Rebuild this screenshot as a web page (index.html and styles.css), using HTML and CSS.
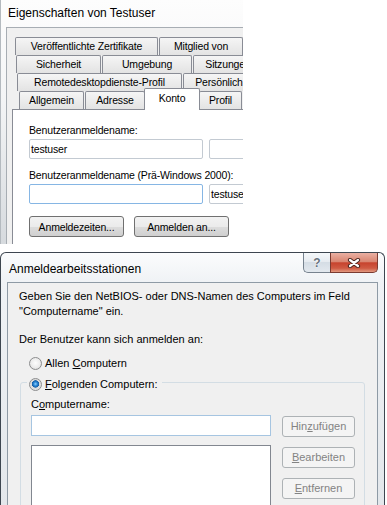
FILE: index.html
```html
<!DOCTYPE html>
<html lang="de">
<head>
<meta charset="utf-8">
<title>Anmeldearbeitsstationen</title>
<link rel="stylesheet" href="styles.css">
</head>
<body>
<section class="win-top">
  <div class="top-title">Eigenschaften von Testuser</div>
  <div class="top-client">
    <div class="tabs">
      <div class="tab-row r1">
        <div class="tab t-zert">Veröffentlichte Zertifikate</div>
        <div class="tab t-mitglied">Mitglied von</div>
      </div>
      <div class="tab-row r2">
        <div class="tab t-sicher">Sicherheit</div>
        <div class="tab t-umgebung">Umgebung</div>
        <div class="tab t-sitzung">Sitzungen</div>
      </div>
      <div class="tab-row r3">
        <div class="tab t-remote">Remotedesktopdienste-Profil</div>
        <div class="tab t-pers">Persönlich</div>
      </div>
      <div class="tab-row r4">
        <div class="tab t-allg">Allgemein</div>
        <div class="tab t-adr">Adresse</div>
        <div class="tab sel t-konto">Konto</div>
        <div class="tab t-profil">Profil</div>
      </div>
    </div>
    <div class="panel">
      <div class="lbl">Benutzeranmeldename:</div>
      <div class="inrow">
        <div class="tb w1">testuser</div>
        <div class="tb w2"></div>
      </div>
      <div class="lbl lbl2">Benutzeranmeldename (Prä-Windows 2000):</div>
      <div class="inrow">
        <div class="tb w1 focus"></div>
        <div class="tb w2">testuser</div>
      </div>
      <div class="btnrow">
        <button type="button" class="btn">Anmeldezeiten...</button>
        <button type="button" class="btn">Anmelden an...</button>
      </div>
    </div>
  </div>
</section>

<section class="win-bot">
  <div class="bot-title">
    <div class="bot-title-text">Anmeldearbeitsstationen</div>
    <div class="caption-btns">
      <div class="cap-help"><span class="q">?</span></div>
      <div class="cap-close">
        <svg width="14" height="10" viewBox="0 0 14 10">
          <path d="M3 2 L11 8 M11 2 L3 8" stroke="#4a2620" stroke-width="4.2" stroke-linecap="round" fill="none"/>
          <path d="M3 2 L11 8 M11 2 L3 8" stroke="#ffffff" stroke-width="2.2" stroke-linecap="round" fill="none"/>
        </svg>
      </div>
    </div>
  </div>
  <div class="bot-client">
    <p class="intro">Geben Sie den NetBIOS- oder DNS-Namen des Computers im Feld<br>"Computername" ein.</p>
    <p class="prompt">Der Benutzer kann sich anmelden an:</p>
    <div class="radio-row first">
      <span class="radio"></span>
      <span>Allen <u>C</u>omputern</span>
    </div>
    <fieldset class="group">
      <legend class="group-legend">
        <span class="radio-row">
          <span class="radio on"></span>
          <span><u>F</u>olgenden Computern:</span>
        </span>
      </legend>
      <div class="cn-label">C<u>o</u>mputername:</div>
      <div class="cn-grid">
        <div class="cn-left">
          <div class="cn-input"></div>
          <div class="cn-list"></div>
        </div>
        <div class="side">
          <div class="dbtn">Hin<u>z</u>ufügen</div>
          <div class="dbtn"><u>B</u>earbeiten</div>
          <div class="dbtn"><u>E</u>ntfernen</div>
        </div>
      </div>
    </fieldset>
  </div>
</section>
</body>
</html>
```

FILE: styles.css
```css
* { box-sizing: border-box; }
html, body { margin: 0; padding: 0; }
body {
  width: 387px;
  height: 505px;
  overflow: hidden;
  background: #ffffff;
  font-family: "Liberation Sans", Arial, sans-serif;
  color: #000;
}

/* ---------- top window ---------- */
.win-top {
  width: 243px;
  height: 244px;
  overflow: hidden;
  border-left: 1px solid #b4babf;
  padding-left: 5px;
  background: linear-gradient(#fdfdfd 0, #f4f5f6 40%, #d6dade 100%);
}
.top-title {
  height: 27px;
  line-height: 27px;
  padding-left: 2px;
  font-size: 12px;
  white-space: nowrap;
}
.top-client {
  width: 300px;
  height: 300px;
  border: 1px solid #a7adb3;
  border-right: none;
  background: #f0f0f0;
  padding: 9px 0 0 5px;
}
.tab-row {
  display: flex;
  gap: 1px;
  height: 18px;
}
.r1 { margin-left: 3px; }
.r2 { margin-left: 4px; }
.r3 { margin-left: 5px; }
.r4 { margin-left: 7px; }
.tab {
  flex: none;
  height: 18px;
  border: 1px solid #898c95;
  border-bottom: none;
  border-radius: 2px 2px 0 0;
  background: linear-gradient(#f5f5f5, #e3e3e3);
  font-size: 10.5px;
  letter-spacing: -0.15px;
  line-height: 17px;
  text-align: center;
  white-space: nowrap;
  overflow: hidden;
}
.tab.sel {
  position: relative;
  z-index: 1;
  height: 22px;
  margin: -3px -2px 0;
  background: #ffffff;
  line-height: 19px;
}
.t-zert { width: 143px; }
.t-mitglied { width: 84px; }
.t-sicher { width: 85px; }
.t-umgebung { width: 90px; }
.t-sitzung { width: 70px; }
.t-remote { width: 165px; }
.t-pers { width: 72px; }
.t-allg { width: 65px; }
.t-adr { width: 60px; }
.t-konto { width: 56px; }
.t-profil { width: 43px; }

.panel {
  height: 200px;
  border: 1px solid #898c95;
  background: #ffffff;
  padding: 13px 0 0 16px;
}
.lbl {
  font-size: 10.5px;
  letter-spacing: -0.15px;
  line-height: 14px;
  white-space: nowrap;
}
.lbl2 { margin-top: 9px; }
.inrow {
  display: flex;
  gap: 6px;
  margin-top: 2px;
}
.tb {
  flex: none;
  height: 20px;
  border: 1px solid #c3cad2;
  border-radius: 2px;
  background: #fff;
  font-size: 10.5px;
  letter-spacing: -0.15px;
  line-height: 18px;
  padding-left: 1px;
  white-space: nowrap;
  overflow: hidden;
}
.tb.w1 { width: 174px; }
.tb.w2 { width: 100px; }
.tb.focus { border-color: #86b6e4; }
.btnrow {
  display: flex;
  gap: 10px;
  margin-top: 12px;
}
.btn {
  width: 95px;
  height: 21px;
  padding: 0;
  border: 1px solid #707070;
  border-radius: 3px;
  background: linear-gradient(#f2f2f2 0, #ebebeb 50%, #dddddd 50%, #cfcfcf 100%);
  font-family: "Liberation Sans", Arial, sans-serif;
  font-size: 10.5px;
  letter-spacing: -0.15px;
  color: #000;
}

/* ---------- bottom window ---------- */
.win-bot {
  margin-top: 8px;
  width: 385px;
  height: 253px;
  border: 1px solid #3d4650;
  border-bottom: none;
  border-radius: 6px 6px 0 0;
  padding: 0 6px;
  background: linear-gradient(#fbfcfd 0, #eff2f5 30px, #e3e7eb 100%);
  display: flex;
  flex-direction: column;
}
.bot-title {
  display: flex;
  height: 29px;
  flex: none;
}
.bot-title-text {
  flex: 1;
  padding: 9px 0 0 2px;
  font-size: 12px;
  line-height: 14px;
  white-space: nowrap;
}
.caption-btns {
  display: flex;
  align-self: flex-start;
}
.cap-help {
  width: 27px;
  height: 20px;
  border: 1px solid #76828e;
  border-top: none;
  border-right: none;
  border-radius: 0 0 0 5px;
  background: linear-gradient(#f5f8fa 0, #e6ebf0 45%, #d5dde5 50%, #e2e8ee 100%);
  display: flex;
  align-items: center;
  justify-content: center;
}
.q {
  font-size: 12px;
  font-weight: bold;
  color: #66717c;
  text-shadow: 0 0 2px #ffffff, 0 0 1px #ffffff;
  line-height: 12px;
}
.cap-close {
  width: 48px;
  height: 20px;
  border: 1px solid #7a3b31;
  border-top: none;
  border-radius: 0 0 5px 0;
  background: linear-gradient(#eab0a3 0, #d98672 45%, #c7432e 52%, #cf5a43 80%, #e29a80 100%);
  display: flex;
  align-items: center;
  justify-content: center;
}
.bot-client {
  flex: 1;
  border: 1px solid #8e9aa5;
  border-bottom: none;
  background: #f0f0f0;
  padding: 6px 11px 0;
  font-size: 11px;
  line-height: 15px;
}
.intro { margin: 0; white-space: nowrap; }
.prompt { margin: 13px 0 0; }
.radio-row {
  display: flex;
  align-items: center;
  gap: 3px;
  height: 16px;
  white-space: nowrap;
}
.radio-row.first { margin: 8px 0 0 10px; }
.radio {
  flex: none;
  width: 13px;
  height: 13px;
  border-radius: 50%;
  border: 1px solid #8c8d8e;
  background: radial-gradient(circle at 50% 45%, #fdfdfd 0, #ececec 55%, #d2d2d2 100%);
}
.radio.on {
  background: radial-gradient(circle at 50% 45%, #8fd2ff 0, #2d88d6 1.8px, #155fa8 3.4px, #d8d8d8 3.9px, #f4f4f4 100%);
}
.group {
  margin: 1px 1px 0 1px;
  padding: 5px 9px 0 10px;
  border: 1px solid #d3dde4;
  border-radius: 3px;
  min-width: 0;
  height: 140px;
}
.group-legend {
  margin-left: -4px;
  padding: 4px 4px 0 2px;
}
.cn-label { line-height: 15px; }
.cn-grid {
  display: grid;
  grid-template-columns: 240px 73px;
  column-gap: 11px;
  margin-top: 3px;
}
.cn-input {
  height: 21px;
  border: 1px solid #a6c5e1;
  background: #fff;
}
.cn-list {
  margin-top: 9px;
  height: 80px;
  border: 1px solid #828790;
  background: #fff;
}
.side {
  display: flex;
  flex-direction: column;
  gap: 10px;
  padding-top: 1px;
}
.dbtn {
  height: 21px;
  border: 1px solid #adb2b5;
  border-radius: 3px;
  background: #f4f4f4;
  color: #838383;
  text-align: center;
  line-height: 19px;
}
```
